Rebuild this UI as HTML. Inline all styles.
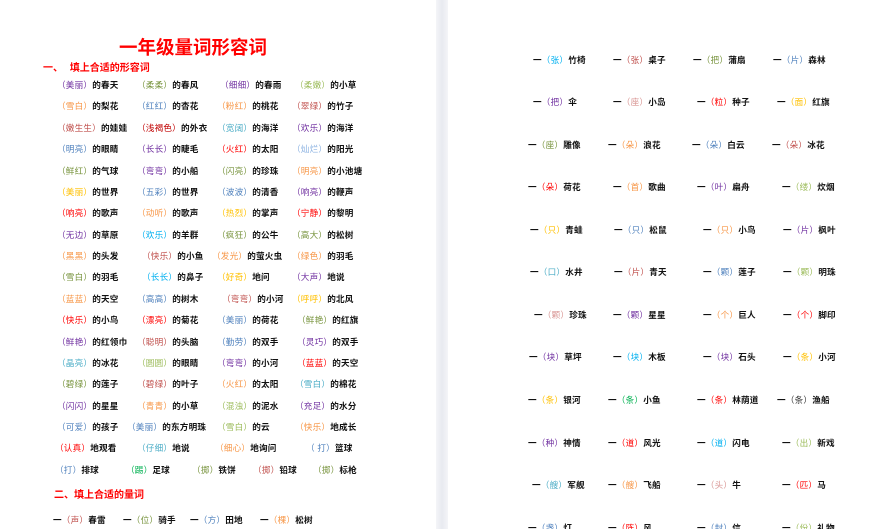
<!DOCTYPE html>
<html><head><meta charset="utf-8"><style>
html,body{margin:0;padding:0;width:894px;height:529px;overflow:hidden;background:#fff}
body{position:relative;font-family:"Liberation Sans","Noto Sans CJK SC",sans-serif;font-weight:bold;font-size:8.6px;color:#111}
.gut{position:absolute;left:436px;top:0;width:12px;height:529px;background:linear-gradient(90deg,#f4f5f8,#e8eaf0 50%,#f4f5f8)}
.r{position:absolute;left:0;width:894px;height:12px;line-height:12px}
.r span{position:absolute;top:0;white-space:nowrap;letter-spacing:0.2px}
i{font-style:normal;font-weight:normal}
.p{color:#7030a0}.g{color:#77933c}.lg{color:#9bbb59}.o{color:#f79646}.rd{color:#ff0000}.dr{color:#c00000}
.b{color:#4f81bd}.lb{color:#00b0f0}.y{color:#ffc000}.t{color:#4bacc6}.br{color:#c0504d}.pk{color:#d99694}.gn{color:#00b050}.sb{color:#8db3e2}.k{color:#333}
.title{position:absolute;left:119px;top:35px;font-size:18.5px;color:#f00;font-weight:bold;font-family:"Noto Sans CJK SC",sans-serif;line-height:24px}
.h{position:absolute;color:#f00;font-size:10px;line-height:14px;font-family:"Noto Sans CJK SC",sans-serif}
</style></head><body>
<div class="gut"></div>
<div class="title">一年级量词形容词</div>
<div class="h" style="left:43px;top:60px">一、&nbsp;&nbsp;&nbsp;填上合适的形容词</div>

<div class="r" style="top:79px"><span style="left:57px"><i class="p">（美丽）</i>的春天</span><span style="left:137px"><i class="g">（柔柔）</i>的春风</span><span style="left:220px"><i class="p">（细细）</i>的春雨</span><span style="left:295px"><i class="lg">（柔嫩）</i>的小草</span></div>
<div class="r" style="top:100px"><span style="left:57px"><i class="o">（雪白）</i>的梨花</span><span style="left:137px"><i class="b">（红红）</i>的杏花</span><span style="left:217px"><i class="o">（粉红）</i>的桃花</span><span style="left:292px"><i class="br">（翠绿）</i>的竹子</span></div>
<div class="r" style="top:122px"><span style="left:57px"><i class="br">（嫩生生）</i>的娃娃</span><span style="left:137px"><i class="dr">（浅褐色）</i>的外衣</span><span style="left:217px"><i class="t">（宽阔）</i>的海洋</span><span style="left:292px"><i class="p">（欢乐）</i>的海洋</span></div>
<div class="r" style="top:143px"><span style="left:57px"><i class="b">（明亮）</i>的眼睛</span><span style="left:137px"><i class="p">（长长）</i>的睫毛</span><span style="left:217px"><i class="rd">（火红）</i>的太阳</span><span style="left:292px"><i class="sb">（灿烂）</i>的阳光</span></div>
<div class="r" style="top:165px"><span style="left:57px"><i class="g">（鲜红）</i>的气球</span><span style="left:137px"><i class="p">（弯弯）</i>的小船</span><span style="left:217px"><i class="g">（闪亮）</i>的珍珠</span><span style="left:292px"><i class="o">（明亮）</i>的小池塘</span></div>
<div class="r" style="top:186px"><span style="left:57px"><i class="y">（美丽）</i>的世界</span><span style="left:137px"><i class="b">（五彩）</i>的世界</span><span style="left:217px"><i class="b">（波波）</i>的清香</span><span style="left:292px"><i class="p">（响亮）</i>的鞭声</span></div>
<div class="r" style="top:207px"><span style="left:57px"><i class="rd">（响亮）</i>的歌声</span><span style="left:137px"><i class="o">（动听）</i>的歌声</span><span style="left:217px"><i class="y">（热烈）</i>的掌声</span><span style="left:292px"><i class="rd">（宁静）</i>的黎明</span></div>
<div class="r" style="top:229px"><span style="left:57px"><i class="p">（无边）</i>的草原</span><span style="left:137px"><i class="lb">（欢乐）</i>的羊群</span><span style="left:217px"><i class="g">（疯狂）</i>的公牛</span><span style="left:292px"><i class="g">（高大）</i>的松树</span></div>
<div class="r" style="top:250px"><span style="left:57px"><i class="o">（黑黑）</i>的头发</span><span style="left:142px"><i class="br">（快乐）</i>的小鱼</span><span style="left:212px"><i class="o">（发光）</i>的萤火虫</span><span style="left:292px"><i class="o">（绿色）</i>的羽毛</span></div>
<div class="r" style="top:271px"><span style="left:57px"><i class="g">（雪白）</i>的羽毛</span><span style="left:142px"><i class="lb">（长长）</i>的鼻子</span><span style="left:217px"><i class="y">（好奇）</i>地问</span><span style="left:292px"><i class="p">（大声）</i>地说</span></div>
<div class="r" style="top:293px"><span style="left:57px"><i class="o">（蓝蓝）</i>的天空</span><span style="left:137px"><i class="b">（高高）</i>的树木</span><span style="left:222px"><i class="br">（弯弯）</i>的小河</span><span style="left:292px"><i class="y">（呼呼）</i>的北风</span></div>
<div class="r" style="top:314px"><span style="left:57px"><i class="rd">（快乐）</i>的小鸟</span><span style="left:137px"><i class="rd">（漂亮）</i>的菊花</span><span style="left:217px"><i class="b">（美丽）</i>的荷花</span><span style="left:297px"><i class="g">（鲜艳）</i>的红旗</span></div>
<div class="r" style="top:336px"><span style="left:57px"><i class="p">（鲜艳）</i>的红领巾</span><span style="left:137px"><i class="br">（聪明）</i>的头脑</span><span style="left:217px"><i class="b">（勤劳）</i>的双手</span><span style="left:297px"><i class="p">（灵巧）</i>的双手</span></div>
<div class="r" style="top:357px"><span style="left:57px"><i class="t">（晶亮）</i>的冰花</span><span style="left:137px"><i class="lg">（圆圆）</i>的眼睛</span><span style="left:217px"><i class="p">（弯弯）</i>的小河</span><span style="left:297px"><i class="rd">（蓝蓝）</i>的天空</span></div>
<div class="r" style="top:378px"><span style="left:57px"><i class="g">（碧绿）</i>的莲子</span><span style="left:137px"><i class="br">（碧绿）</i>的叶子</span><span style="left:217px"><i class="o">（火红）</i>的太阳</span><span style="left:295px"><i class="t">（雪白）</i>的棉花</span></div>
<div class="r" style="top:400px"><span style="left:57px"><i class="p">（闪闪）</i>的星星</span><span style="left:137px"><i class="o">（青青）</i>的小草</span><span style="left:217px"><i class="lg">（混浊）</i>的泥水</span><span style="left:295px"><i class="p">（充足）</i>的水分</span></div>
<div class="r" style="top:421px"><span style="left:57px"><i class="b">（可爱）</i>的孩子</span><span style="left:127px"><i class="b">（美丽）</i>的东方明珠</span><span style="left:217px"><i class="lg">（雪白）</i>的云</span><span style="left:295px"><i class="o">（快乐）</i>地成长</span></div>
<div class="r" style="top:442px"><span style="left:55px"><i class="rd">（认真）</i>地观看</span><span style="left:137px"><i class="t">（仔细）</i>地说</span><span style="left:215px"><i class="o">（细心）</i>地询问</span><span style="left:306px"><i class="b">（ 打）</i>篮球</span></div>
<div class="r" style="top:464px"><span style="left:55px"><i class="b">（打）</i>排球</span><span style="left:126px"><i class="gn">（踢）</i>足球</span><span style="left:192px"><i class="g">（掷）</i>铁饼</span><span style="left:253px"><i class="br">（掷）</i>铅球</span><span style="left:313px"><i class="g">（掷）</i>标枪</span></div>

<div class="h" style="left:54px;top:487px">二、填上合适的量词</div>
<div class="r" style="top:514px"><span style="left:53px">一<i class="br">（声）</i>春雷</span><span style="left:123px">一<i class="g">（位）</i>骑手</span><span style="left:190px">一<i class="b">（方）</i>田地</span><span style="left:260px">一<i class="o">（棵）</i>松树</span></div>

<div class="r" style="top:54px"><span style="left:533px">一<i class="lb">（张）</i>竹椅</span><span style="left:613px">一<i class="br">（张）</i>桌子</span><span style="left:693px">一<i class="g">（把）</i>蒲扇</span><span style="left:773px">一<i class="b">（片）</i>森林</span></div>
<div class="r" style="top:96px"><span style="left:533px">一<i class="p">（把）</i>伞</span><span style="left:613px">一<i class="pk">（座）</i>小岛</span><span style="left:697px">一<i class="rd">（粒）</i>种子</span><span style="left:777px">一<i class="y">（面）</i>红旗</span></div>
<div class="r" style="top:139px"><span style="left:528px">一<i class="g">（座）</i>雕像</span><span style="left:608px">一<i class="o">（朵）</i>浪花</span><span style="left:692px">一<i class="b">（朵）</i>白云</span><span style="left:772px">一<i class="br">（朵）</i>冰花</span></div>
<div class="r" style="top:181px"><span style="left:528px">一<i class="rd">（朵）</i>荷花</span><span style="left:613px">一<i class="o">（首）</i>歌曲</span><span style="left:697px">一<i class="p">（叶）</i>扁舟</span><span style="left:782px">一<i class="lg">（缕）</i>炊烟</span></div>
<div class="r" style="top:224px"><span style="left:530px">一<i class="y">（只）</i>青蛙</span><span style="left:614px">一<i class="b">（只）</i>松鼠</span><span style="left:703px">一<i class="o">（只）</i>小鸟</span><span style="left:783px">一<i class="p">（片）</i>枫叶</span></div>
<div class="r" style="top:266px"><span style="left:530px">一<i class="t">（口）</i>水井</span><span style="left:614px">一<i class="br">（片）</i>青天</span><span style="left:703px">一<i class="b">（颗）</i>莲子</span><span style="left:783px">一<i class="lg">（颗）</i>明珠</span></div>
<div class="r" style="top:309px"><span style="left:534px">一<i class="pk">（颗）</i>珍珠</span><span style="left:613px">一<i class="p">（颗）</i>星星</span><span style="left:703px">一<i class="o">（个）</i>巨人</span><span style="left:783px">一<i class="rd">（个）</i>脚印</span></div>
<div class="r" style="top:351px"><span style="left:529px">一<i class="p">（块）</i>草坪</span><span style="left:613px">一<i class="lb">（块）</i>木板</span><span style="left:703px">一<i class="p">（块）</i>石头</span><span style="left:783px">一<i class="y">（条）</i>小河</span></div>
<div class="r" style="top:394px"><span style="left:528px">一<i class="y">（条）</i>银河</span><span style="left:608px">一<i class="gn">（条）</i>小鱼</span><span style="left:697px">一<i class="rd">（条）</i>林荫道</span><span style="left:777px">一<i class="k">（条）</i>渔船</span></div>
<div class="r" style="top:437px"><span style="left:528px">一<i class="p">（种）</i>神情</span><span style="left:608px">一<i class="rd">（道）</i>风光</span><span style="left:697px">一<i class="lb">（道）</i>闪电</span><span style="left:782px">一<i class="lg">（出）</i>新戏</span></div>
<div class="r" style="top:479px"><span style="left:532px">一<i class="t">（艘）</i>军舰</span><span style="left:608px">一<i class="o">（艘）</i>飞船</span><span style="left:697px">一<i class="pk">（头）</i>牛</span><span style="left:782px">一<i class="rd">（匹）</i>马</span></div>
<div class="r" style="top:522px"><span style="left:528px">一<i class="b">（盏）</i>灯</span><span style="left:608px">一<i class="rd">（阵）</i>风</span><span style="left:697px">一<i class="b">（封）</i>信</span><span style="left:782px">一<i class="lg">（份）</i>礼物</span></div>
</body></html>
